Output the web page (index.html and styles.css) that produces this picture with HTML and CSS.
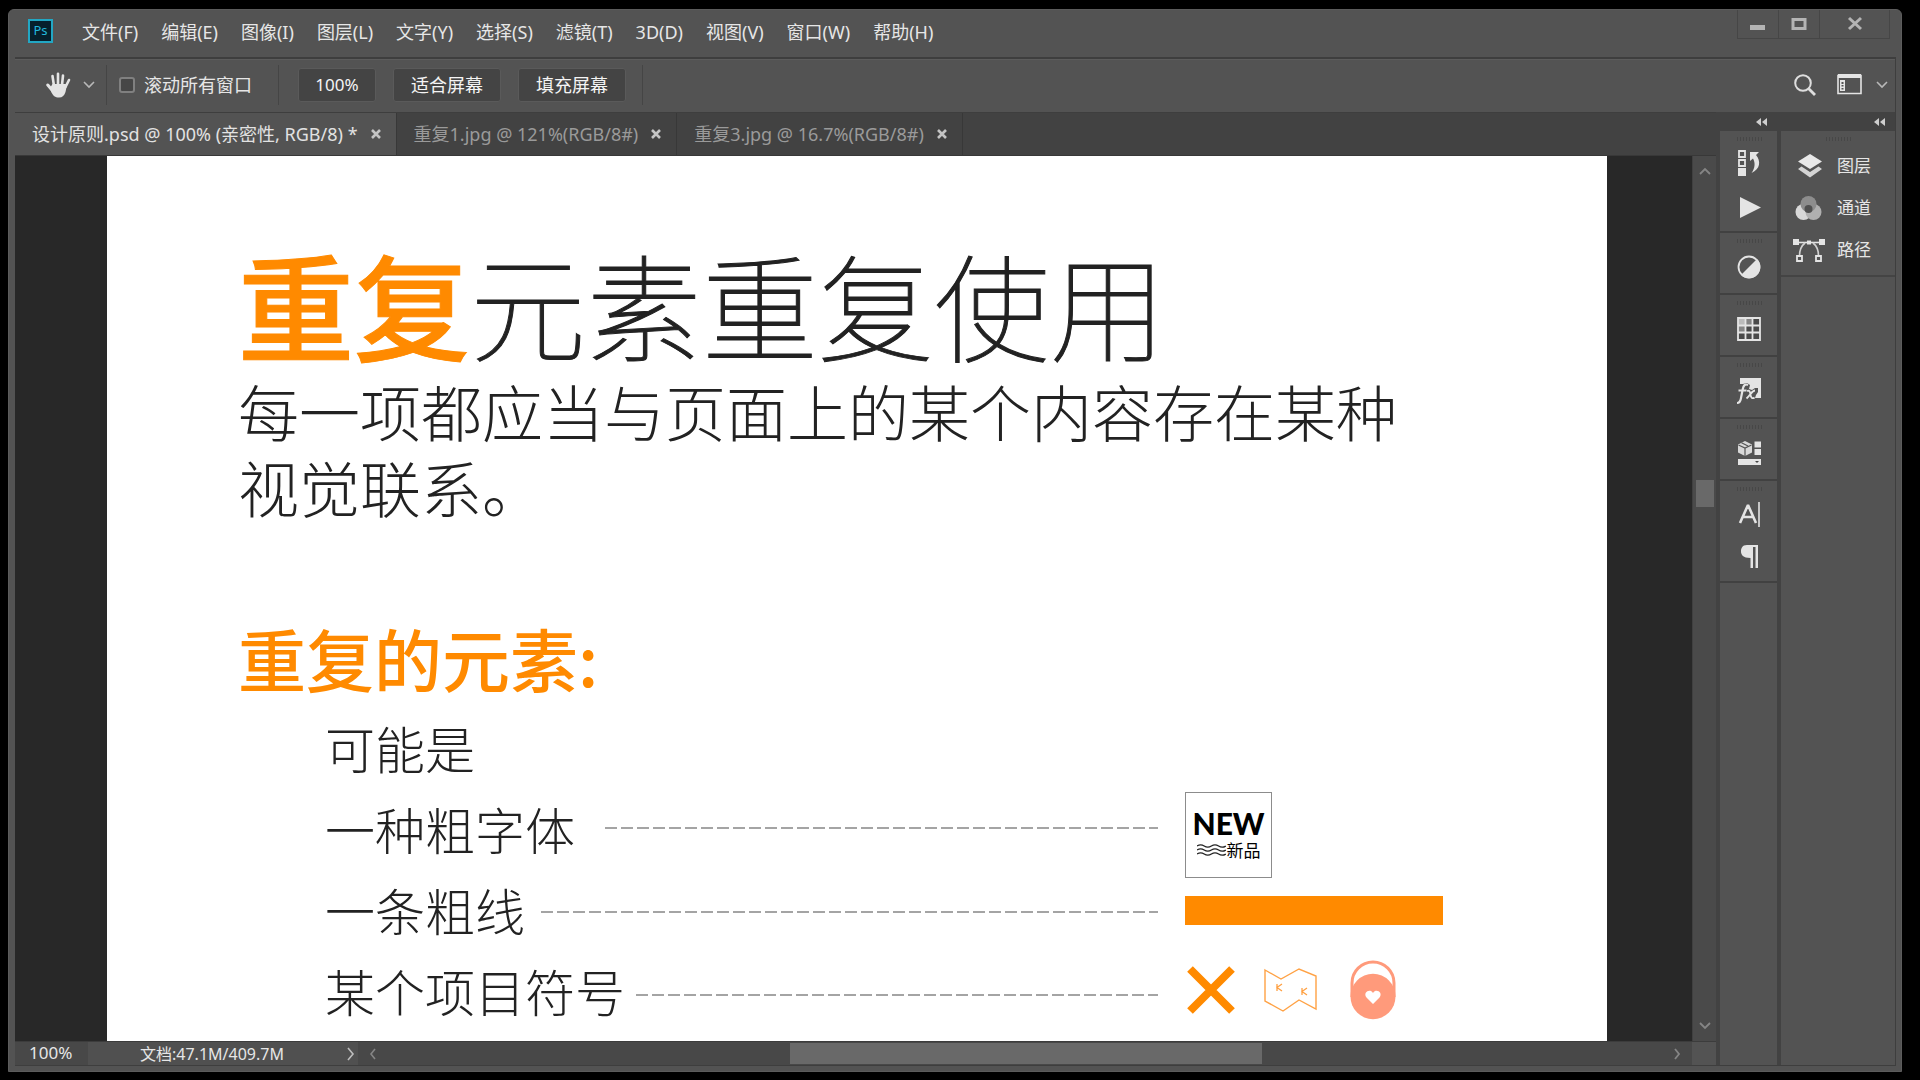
FILE: index.html
```html
<!DOCTYPE html>
<html lang="zh-CN">
<head>
<meta charset="utf-8">
<meta name="viewport" content="width=device-width, initial-scale=1">
<title>设计原则.psd</title>
<link rel="stylesheet" href="styles.css">
</head>
<body>
<div class="window">
  <header class="menubar">
    <span class="logo">Ps</span>
    <nav class="menus">
      <button class="menu">文件(F)</button>
      <button class="menu">编辑(E)</button>
      <button class="menu">图像(I)</button>
      <button class="menu">图层(L)</button>
      <button class="menu">文字(Y)</button>
      <button class="menu">选择(S)</button>
      <button class="menu">滤镜(T)</button>
      <button class="menu">3D(D)</button>
      <button class="menu">视图(V)</button>
      <button class="menu">窗口(W)</button>
      <button class="menu">帮助(H)</button>
    </nav>
    <div class="winctl">
      <button class="winbtn" aria-label="最小化"><svg width="16" height="16" viewBox="0 0 16 16"><path d="M0 9h15v5H0z" fill="#b4b4b4"/></svg></button>
      <button class="winbtn" aria-label="最大化"><svg width="16" height="16" viewBox="0 0 16 16"><path d="M2 3.500h12v9H2z" fill="none" stroke="#b4b4b4" stroke-width="3"/></svg></button>
      <button class="winbtn winbtn-close" aria-label="关闭"><svg width="16" height="16" viewBox="0 0 16 16"><path d="M2 2l12 11M14 2L2 13" stroke="#b4b4b4" stroke-width="3"/></svg></button>
    </div>
  </header>

  <div class="inner">
    <div class="options">
      <button class="tool" aria-label="抓手工具">
        <svg width="25" height="26" viewBox="0 0 25 26"><g stroke="#e4e4e4" stroke-linecap="round" fill="none"><path d="M8 14L6.500 4M12 13V1.800M16 13l1-9.500M19.500 15L23 8" stroke-width="2.600"/><path d="M1.800 13l5 6" stroke-width="3"/></g><path d="M6.500 12h13l1.500 1-1.500 7c-1 3.500-3 5.500-6.500 5.500-4 0-6-2-7.500-5L4 16z" fill="#e4e4e4"/></svg>
        <svg width="12" height="8" viewBox="0 0 12 8"><path d="M1 1l5 5 5-5" fill="none" stroke="#b8b8b8" stroke-width="1.600"/></svg>
      </button>
      <label class="check"><input type="checkbox" class="box">滚动所有窗口</label>
      <div class="zooms">
        <button class="btn btn-zoom">100%</button>
        <button class="btn">适合屏幕</button>
        <button class="btn">填充屏幕</button>
      </div>
      <div class="right-tools">
        <button class="plain" aria-label="搜索"><svg width="22" height="22" viewBox="0 0 22 22"><circle cx="9" cy="9" r="7.800" fill="none" stroke="#dedede" stroke-width="2"/><path d="M14.500 14.500l6.500 6.500" stroke="#dedede" stroke-width="2.800"/></svg></button>
        <button class="plain workspace" aria-label="工作区">
          <svg width="25" height="21" viewBox="0 0 25 21"><path d="M1 1.500h23v18H1z" fill="none" stroke="#e4e4e4" stroke-width="1.600"/><path d="M1 0h23v4H1zM3 6h5v11H3z" fill="#e4e4e4"/><path d="M4.500 8h2v2h-2zm0 3h2v1.500h-2zm0 3h2v1.500h-2z" fill="#535353"/></svg>
          <svg width="12" height="8" viewBox="0 0 12 8"><path d="M1 1l5 5 5-5" fill="none" stroke="#b8b8b8" stroke-width="1.600"/></svg>
        </button>
      </div>
    </div>

    <div class="work">
      <main class="editor">
        <div class="tabs">
          <div class="tab tab-active"><button class="tabname">设计原则.psd @ 100% (亲密性, RGB/8) *</button><button class="tabclose" aria-label="关闭"><svg width="10" height="10" viewBox="0 0 10 10"><path d="M1 1l8 8M9 1L1 9" stroke="#c4c4c4" stroke-width="2.600"/></svg></button></div>
          <div class="tab"><button class="tabname">重复1.jpg @ 121%(RGB/8#)</button><button class="tabclose" aria-label="关闭"><svg width="10" height="10" viewBox="0 0 10 10"><path d="M1 1l8 8M9 1L1 9" stroke="#c4c4c4" stroke-width="2.600"/></svg></button></div>
          <div class="tab"><button class="tabname">重复3.jpg @ 16.7%(RGB/8#)</button><button class="tabclose" aria-label="关闭"><svg width="10" height="10" viewBox="0 0 10 10"><path d="M1 1l8 8M9 1L1 9" stroke="#c4c4c4" stroke-width="2.600"/></svg></button></div>
        </div>

        <div class="stage">
          <div class="viewport">
            <article class="page">
              <h1 class="title"><strong class="accent">重复</strong>元素重复使用</h1>
              <p class="lead">每一项都应当与页面上的某个内容存在某种<br>视觉联系。</p>
              <h2 class="subtitle">重复的元素:</h2>
              <ul class="list">
                <li class="row"><span>可能是</span></li>
                <li class="row">
                  <div class="entry entry-font"><span>一种粗字体</span><i class="dash"></i></div>
                  <div class="badge">
                    <b class="new">NEW</b>
                    <span class="newsub"><svg width="29" height="14" viewBox="0 0 29 14"><path d="M0 3q3.600-2.400 7.200 0t7.200 0 7.200 0 7.200 0M0 7q3.600-2.400 7.200 0t7.200 0 7.200 0 7.200 0M0 11q3.600-2.400 7.200 0t7.200 0 7.200 0 7.200 0" fill="none" stroke="#222" stroke-width="1.300"/></svg>新品</span>
                  </div>
                </li>
                <li class="row">
                  <div class="entry entry-line"><span>一条粗线</span><i class="dash"></i></div>
                  <div class="bar"></div>
                </li>
                <li class="row">
                  <div class="entry entry-symbol"><span>某个项目符号</span><i class="dash"></i></div>
                  <div class="symbols">
                    <svg width="50" height="50" viewBox="0 0 50 50"><path d="M4 4l42 42M46 4L4 46" stroke="#ff8a00" stroke-width="8"/></svg>
                    <svg width="54" height="46" viewBox="0 0 54 46"><path d="M1 3l16 9 18-10 17 7v33l-17-9-16 11-18-10z" fill="none" stroke="#ffa245" stroke-width="1.400"/><path d="M13 17v7M18 17l-5 3.500 5 3.500M38 21v7M43 21l-5 3.500 5 3.500" fill="none" stroke="#ffa245" stroke-width="1.300"/></svg>
                    <svg class="bag" width="46" height="60" viewBox="0 0 46 60"><path d="M2 37V23a21 21 0 0 1 42 0v14" fill="none" stroke="#ff9a7b" stroke-width="3"/><ellipse cx="23" cy="36.500" rx="22.500" ry="22.800" fill="#ff9a7b"/><path d="M23 44l-6.500-6.500c-4-5 3.500-9.500 6.500-4.500 3-5 10.500-.5 6.500 4.500z" fill="#fff"/></svg>
                  </div>
                </li>
              </ul>
            </article>
          </div>
          <div class="vscroll">
            <button class="plain" aria-label="向上"><svg width="12" height="8" viewBox="0 0 12 8"><path d="M1 7l5-5 5 5" fill="none" stroke="#858585" stroke-width="1.800"/></svg></button>
            <div class="vtrack"><div class="vthumb"></div></div>
            <button class="plain" aria-label="向下"><svg width="12" height="8" viewBox="0 0 12 8"><path d="M1 1l5 5 5-5" fill="none" stroke="#858585" stroke-width="1.800"/></svg></button>
          </div>
        </div>

        <footer class="status">
          <span class="percent">100%</span>
          <button class="docinfo">文档:47.1M/409.7M<svg width="8" height="14" viewBox="0 0 8 14"><path d="M1 1l5 6-5 6" fill="none" stroke="#bdbdbd" stroke-width="1.600"/></svg></button>
          <button class="plain harrow" aria-label="向左"><svg width="8" height="12" viewBox="0 0 8 12"><path d="M6 1L2 6l4 5" fill="none" stroke="#858585" stroke-width="1.600"/></svg></button>
          <div class="htrack"><div class="hthumb"></div></div>
          <button class="plain harrow" aria-label="向右"><svg width="8" height="12" viewBox="0 0 8 12"><path d="M2 1l4 5-4 5" fill="none" stroke="#858585" stroke-width="1.800"/></svg></button>
          <span class="corner"></span>
        </footer>
      </main>

      <aside class="dock dock-icons">
        <div class="dockhead"><button class="plain" aria-label="展开"><svg width="12" height="8" viewBox="0 0 12 8"><path d="M5 0L0 4l5 4zM11 0L6 4l5 4z" fill="#cfcfcf"/></svg></button></div>
        <div class="group group-two">
          <button class="icon" aria-label="历史记录"><svg width="24" height="28" viewBox="0 0 24 28"><path d="M2 2h6v6H2zM2 11h6v6H2z" fill="none" stroke="#e4e4e4" stroke-width="1.800"/><path d="M1 19h8v8H1z" fill="#e4e4e4"/><path d="M13 3h9l-3 3c5 6 4.500 14-4.500 18 3.500-5 4-10 1.500-14.500L13 12z" fill="#e4e4e4"/></svg></button>
          <button class="icon" aria-label="动作"><svg width="24" height="28" viewBox="0 0 24 28"><path d="M3 4l21 10.500L3 25z" fill="#e4e4e4"/></svg></button>
        </div>
        <div class="group"><button class="icon" aria-label="调整"><svg width="24" height="24" viewBox="0 0 24 24"><circle cx="12" cy="12" r="10.500" fill="none" stroke="#e4e4e4" stroke-width="1.800"/><path d="M20 4a11.300 11.300 0 1 1-16 16z" fill="#e4e4e4"/></svg></button></div>
        <div class="group"><button class="icon" aria-label="色板"><svg width="24" height="24" viewBox="0 0 24 24"><path d="M1 1h22v22H1z" fill="#4a4a4a"/><path d="M1 1h7v7H1z" fill="#bbb"/><path d="M8 1h7v7H8zM1 8h7v8H1z" fill="#858585"/><path d="M1 1h22v22H1zM8.500 1v22M15.500 1v22M1 8.500h22M1 15.500h22" fill="none" stroke="#e4e4e4" stroke-width="1.800"/></svg></button></div>
        <div class="group"><button class="icon" aria-label="样式"><svg width="26" height="28" viewBox="0 0 26 28"><path d="M4 1h21v20h-6l1-3 2-3v-4h-3l-3 2-3-1 1-4-3-2-4 1H4z" fill="#e4e4e4"/><path d="M12 8c-3-1.500-4.500.5-5.200 4L4.800 22c-.5 2.500-1.500 4-3.800 4M2.500 13.500h8" fill="none" stroke="#e4e4e4" stroke-width="2.200"/><path d="M11 14c3-1 3 1 3.500 4s2 4 4 2.500M19 13.500c-3 0-4 4-8.500 8" fill="none" stroke="#e4e4e4" stroke-width="1.800"/></svg></button></div>
        <div class="group"><button class="icon" aria-label="库"><svg width="24" height="26" viewBox="0 0 24 26"><path d="M8 1l7 3.500v8L8 16l-7-3.500v-8z" fill="#d8d8d8"/><path d="M1.500 5L8 8l6.500-3M8 8v8M4.500 2.800L11 6" fill="none" stroke="#555" stroke-width="1.200"/><path d="M17.500 1.500H24v6h-6.500zM17.500 9H24v6h-6.500zM1 19h23v6H1z" fill="#e4e4e4"/><path d="M18 21h4l-2 2z" fill="#444"/></svg></button></div>
        <div class="group group-two">
          <button class="icon" aria-label="字符"><svg width="24" height="26" viewBox="0 0 24 26"><path d="M3 22L11 4l8 18M6 16h10" fill="none" stroke="#e4e4e4" stroke-width="2.600" stroke-linejoin="bevel"/><path d="M22 1v25" stroke="#e4e4e4" stroke-width="1.600"/></svg></button>
          <button class="icon" aria-label="段落"><svg width="24" height="26" viewBox="0 0 24 26"><path d="M10 2h11v23h-2.500V4H16v21h-2.500V15C6 15 4 11.500 4 8.500S5 2 10 2z" fill="#e4e4e4"/></svg></button>
        </div>
      </aside>

      <aside class="dock dock-panels">
        <div class="dockhead"><button class="plain" aria-label="展开"><svg width="12" height="8" viewBox="0 0 12 8"><path d="M5 0L0 4l5 4zM11 0L6 4l5 4z" fill="#cfcfcf"/></svg></button></div>
        <div class="panels">
          <button class="panel"><svg width="32" height="26" viewBox="0 0 32 26"><path d="M17 1l12 7.500L17 16 5 8.500z" fill="#e8e8e8"/><path d="M5 16l3.500-2.500L17 19l8.500-5.500L29 16l-12 8.500z" fill="#d4d4d4"/></svg>图层</button>
          <button class="panel"><svg width="32" height="26" viewBox="0 0 32 26"><circle cx="10.500" cy="17" r="8" fill="#d8d8d8"/><circle cx="20.500" cy="17" r="8" fill="#b0b0b0"/><circle cx="15.500" cy="9" r="8" fill="#8d8d8d"/><circle cx="15.500" cy="14" r="4" fill="#505050"/></svg>通道</button>
          <button class="panel"><svg width="32" height="26" viewBox="0 0 32 26"><path d="M3 5.500h26" stroke="#e4e4e4" stroke-width="1.600"/><path d="M12 6C8 9 6.500 14 6.500 19M20 6c4 3 5.500 8 5.500 13" fill="none" stroke="#d0d0d0" stroke-width="1.600"/><path d="M0 2h6v6H0zM26 2h6v6h-6zM14 3.500h4v4h-4z" fill="#e4e4e4"/><path d="M4 19h5v5H4zM23 19h5v5h-5z" fill="#535353" stroke="#e4e4e4" stroke-width="1.800"/></svg>路径</button>
        </div>
      </aside>
    </div>
  </div>
</div>
</body>
</html>
```
FILE: styles.css
```css
* { box-sizing: border-box; }

body {
  margin: 0;
  height: 100vh;
  padding: 9px 18px 8px 8px;
  background: #000;
  color: #e6e6e6;
  font: 18px/24px "Noto Sans", "Noto Sans CJK SC", sans-serif;
  overflow: hidden;
}

button {
  border: 0;
  padding: 0;
  background: none;
  color: inherit;
  font: inherit;
  white-space: nowrap;
}

svg { display: block; flex: none; }

.window {
  height: 100%;
  display: flex;
  flex-direction: column;
  padding: 0 5px 5px 6px;
  background: #535353;
  border: 1px solid #5c5c5c;
  border-radius: 6px 6px 0 0;
}

/* Menu bar */
.menubar {
  display: flex;
  flex: none;
  height: 47px;
  padding: 0 6px 0 13px;
}
.logo {
  width: 25px;
  height: 24px;
  margin-top: 9px;
  border: 2px solid #22a7c4;
  background: #06202c;
  color: #22b8dc;
  font-size: 13px;
  line-height: 19px;
  text-align: center;
}
.menus {
  display: flex;
  flex: 1;
  gap: 23px;
  padding: 10px 0 0 29px;
  align-items: flex-start;
}
.winctl { display: flex; height: 29px; }
.winbtn {
  display: grid;
  place-items: center;
  width: 41px;
  border: solid #464646;
  border-width: 0 0 1px 1px;
}
.winbtn-close { width: 71px; border-right-width: 1px; }

.inner {
  display: flex;
  flex: 1;
  flex-direction: column;
  min-height: 0;
  border: 1px solid #3e3e3e;
  border-width: 2px 1px 1px 0;
}

/* Options bar */
.options {
  display: flex;
  flex: none;
  align-items: center;
  height: 53px;
  padding-bottom: 3px;
  border-top: 1px solid #5c5c5c;
}
.tool {
  display: flex;
  align-items: center;
  gap: 12px;
  width: 92px;
  height: 40px;
  padding-left: 31px;
  border-right: 1px solid #454545;
}
.check {
  display: flex;
  align-items: center;
  gap: 9px;
  width: 172px;
  height: 40px;
  padding-left: 12px;
  border-right: 1px solid #454545;
}
.box {
  appearance: none;
  width: 16px;
  height: 16px;
  margin: 0;
  border: 2px solid #808080;
  border-radius: 3px;
  background: #464646;
}
.zooms {
  display: flex;
  align-items: center;
  gap: 17px;
  height: 40px;
  padding: 0 16px 0 19px;
  border-right: 1px solid #454545;
}
.btn {
  width: 108px;
  height: 34px;
  border: 1px solid #5a5a5a;
  border-radius: 3px;
  background: #444;
  color: #f4f4f4;
}
.btn-zoom { width: 78px; font-size: 17px; }
.right-tools {
  display: flex;
  gap: 21px;
  margin-left: auto;
  padding-right: 7px;
}
.workspace { display: flex; align-items: center; gap: 14px; }

/* Work area */
.work { display: flex; flex: 1; min-height: 0; background: #424242; }
.editor { display: flex; flex: 1; flex-direction: column; min-width: 0; }

.tabs {
  display: flex;
  flex: none;
  height: 44px;
  background: #424242;
  border-bottom: 1px solid #383838;
  border-top: 1px solid #3e3e3e;
}
.tab {
  display: flex;
  align-items: center;
  gap: 13px;
  padding: 0 15px 0 17px;
  border-right: 1px solid #383838;
  color: #9a9a9a;
}
.tab-active { background: #535353; color: #e2e2e2; }

.stage { display: flex; flex: 1; min-height: 0; }
.viewport { flex: 1; padding: 0 85px 0 92px; background: #282828; overflow: hidden; }
.page {
  height: 100%;
  padding: 76px 0 0 131px;
  background: #fff;
  color: #222;
  font-family: "Noto Sans CJK SC", sans-serif;
  font-weight: 300;
  white-space: nowrap;
}
.title {
  margin: 0;
  font-size: 116px;
  line-height: 140px;
  font-weight: 100;
  -webkit-text-stroke: 1px #222;
}
.accent { color: #ff8a00; font-weight: 500; -webkit-text-stroke: 1px #ff8a00; }
.lead { margin: 1px 0 0; font-size: 61px; line-height: 76px; }
.subtitle {
  margin: 86px 0 0;
  color: #ff8a00;
  font-size: 68px;
  line-height: 94px;
  font-weight: 500;
}
.list { margin: 0; padding: 1px 0 0 87px; list-style: none; }
.row { display: flex; align-items: center; height: 81px; font-size: 50px; line-height: 80px; }
.entry { display: flex; align-items: center; width: 860px; padding-right: 27px; }
.entry-font { gap: 30px; }
.entry-line { gap: 16px; }
.entry-symbol { gap: 11px; }
.dash {
  flex: 1;
  height: 2px;
  background: repeating-linear-gradient(90deg, #a4a4a4 0 12px, transparent 12px 16px);
}
.entry-line .dash { margin-top: 6px; }
.entry-symbol .dash { margin-top: 10px; }
.badge {
  width: 87px;
  height: 86px;
  margin-top: 14px;
  padding-top: 14px;
  border: 1px solid #8c8c8c;
  color: #000;
  text-align: center;
}
.new { display: block; font: 900 30px/32px Lato, sans-serif; }
.newsub {
  display: flex;
  align-items: center;
  justify-content: center;
  gap: 1px;
  font-size: 17px;
  line-height: 22px;
  font-weight: 400;
}
.bar { width: 258px; height: 29px; margin-top: 4px; background: #ff8a00; }
.symbols { display: flex; align-items: center; gap: 28px; padding-left: 1px; }
.bag { margin-left: 4px; }

.vscroll {
  display: flex;
  flex-direction: column;
  align-items: center;
  width: 24px;
  padding: 11px 0;
  background: #4a4a4a;
  border-left: 1px solid #404040;
}
.vtrack { flex: 1; padding-top: 305px; }
.vthumb { width: 18px; height: 27px; background: #696969; }

.status {
  display: flex;
  flex: none;
  height: 24px;
  background: #484848;
  border-top: 1px solid #3c3c3c;
  font-size: 17px;
  line-height: 22px;
}
.percent { width: 73px; padding-left: 14px; }
.docinfo {
  display: flex;
  align-items: center;
  justify-content: space-between;
  width: 270px;
  padding: 0 3px 0 52px;
  background: #505050;
  font-size: 16px;
}
.harrow { display: grid; place-items: center; width: 30px; }
.htrack {
  display: grid;
  flex: 1;
  grid-template-columns: 402fr 472fr 400fr;
  padding: 1px 0;
}
.hthumb { grid-column: 2; background: #696969; }
.corner { width: 24px; background: #535353; }

/* Docks */
.dock { display: flex; flex-direction: column; background: #535353; border-left: 4px solid #424242; }
.dock-icons { width: 61px; }
.dock-panels { width: 118px; }
.dockhead {
  display: flex;
  align-items: center;
  justify-content: flex-end;
  flex: none;
  height: 19px;
  padding-right: 9px;
  background: #424242;
}
.group {
  display: flex;
  flex-direction: column;
  align-items: center;
  justify-content: center;
  position: relative;
  height: 62px;
  padding: 8px 0 0 1px;
  border-bottom: 2px solid #414141;
}
.group-two { height: 102px; gap: 16px; }
.group::before, .panels::before {
  content: "";
  position: absolute;
  top: 6px;
  left: calc(50% - 12px);
  width: 26px;
  height: 4px;
  background: repeating-linear-gradient(90deg, #474747 0 1px, #535353 1px 3px);
}
.panels {
  position: relative;
  display: flex;
  flex-direction: column;
  height: 146px;
  padding: 14px 0 0 12px;
  border-bottom: 2px solid #444;
}
.panel { display: flex; align-items: center; gap: 12px; height: 42px; font-size: 17px; }
```
